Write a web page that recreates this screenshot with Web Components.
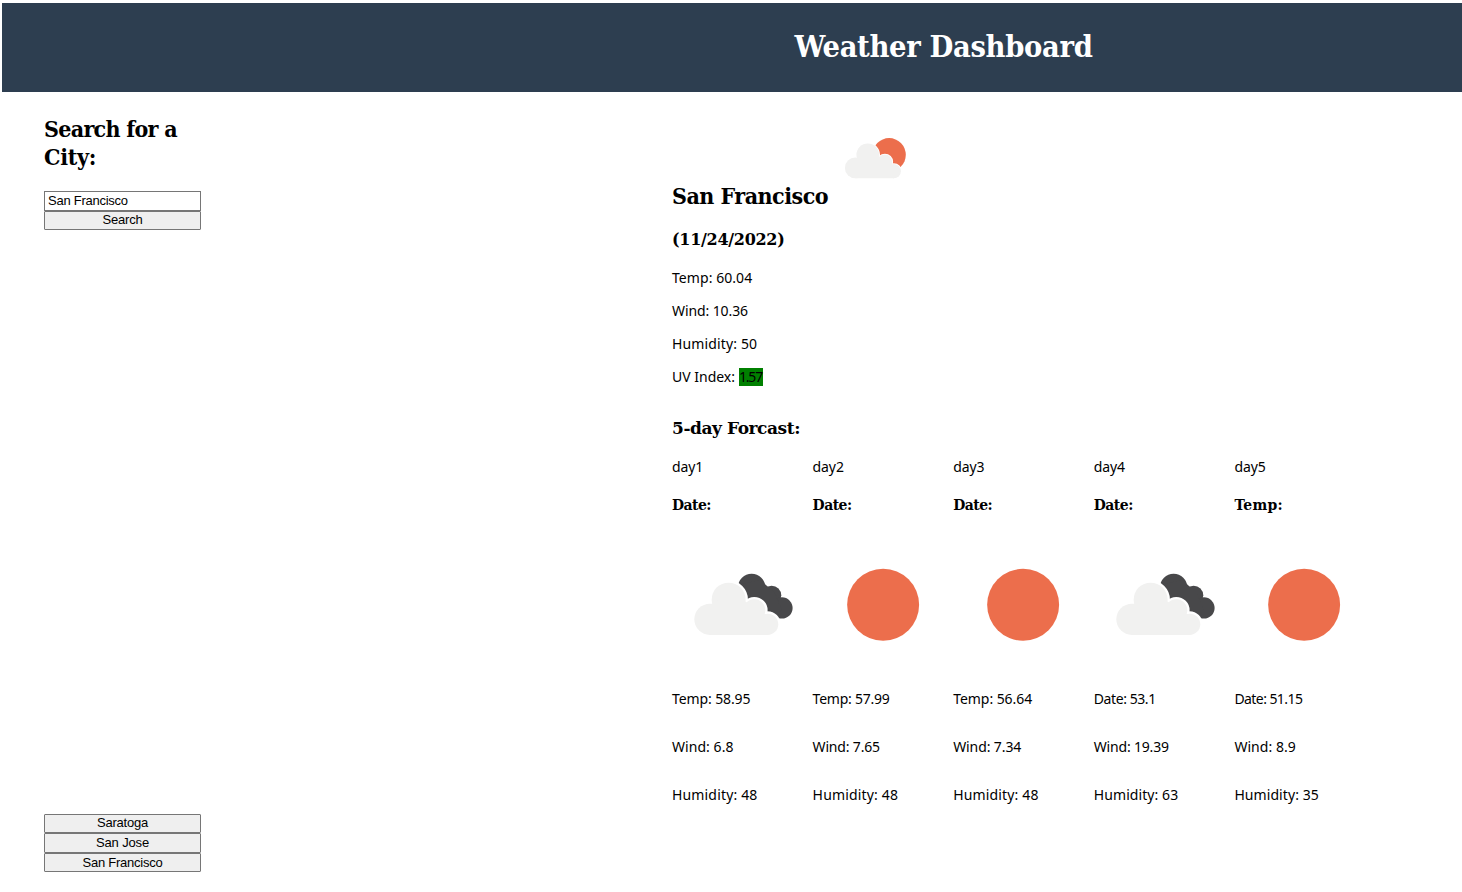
<!DOCTYPE html>
<html lang="en">
<head>
<meta charset="utf-8">
<title>Weather Dashboard</title>
<style>
html,body{margin:0;background:#fff;color:#000}
body{font-family:"Noto Sans","Open Sans",sans-serif;font-size:14px;overflow:hidden}
</style>
</head>
<body>
<weather-app></weather-app>
<script>
// Inline text whose tracking is adjusted to fill a set measure.
class FitText extends HTMLElement{
  connectedCallback(){
    if(!this.shadowRoot)this.attachShadow({mode:'open'}).innerHTML='<style>:host{display:inline-block;white-space:nowrap;vertical-align:top}</style><slot></slot>';
    const target=parseFloat(this.getAttribute('w'));
    const natural=this.getBoundingClientRect().width;
    const n=this.textContent.length;
    if(target&&natural)this.style.letterSpacing=((target-natural)/n).toFixed(3)+'px';
  }
}
customElements.define('fit-text',FitText);

// The cloud shape is drawn twice: a white halo first, then the fill.
const shape=`<circle cx="283" cy="482" r="33"/><circle cx="323" cy="524" r="32"/><circle cx="206" cy="450" r="51"/>`;
const cloud=halo=>`<g fill="#fff" stroke="#fff" stroke-width="${halo}">${shape}</g><g fill="#f1f1f0">${shape}<circle cx="150" cy="509" r="47"/><path d="M150 556V470L206 430L255 455L310 490L340 510L323 556Z"/></g>`;
class WeatherIcon extends HTMLElement{
  constructor(){super();this.attachShadow({mode:'open'});}
  connectedCallback(){
    const k=this.getAttribute('kind');
    const art={
      clouds:`<g fill="#48484a"><circle cx="275" cy="413" r="41"/><circle cx="335" cy="437" r="29"/><circle cx="366" cy="475" r="32"/><path d="M236 405L300 390L345 430L365 480L348 502L318 486L262 447Z"/></g>`+cloud(14),
      sun:`<circle cx="246.5" cy="465.5" r="108" fill="#ec6e4c"/>`,
      partly:`<circle cx="302" cy="450" r="75" fill="#ec6e4c"/>`+cloud(8)
    }[k];
    this.shadowRoot.innerHTML=`<style>:host{display:block}svg{display:block;width:100%;height:100%}</style><svg viewBox="36 253 422 422" aria-hidden="true">${art}</svg>`;
  }
}
customElements.define('weather-icon',WeatherIcon);

class CityButton extends HTMLElement{
  constructor(){super();this.attachShadow({mode:'open'}).innerHTML=`<style>
  :host{display:block;height:19.6px}
  button{display:block;box-sizing:border-box;width:100%;height:100%;margin:0;padding:0 0 var(--lift,1px);border:1px solid #767676;border-radius:1px;background:#efefef;color:#000;font:13px/15px "Liberation Sans",Arial,sans-serif}
  </style><button><slot></slot></button>`;}
}
customElements.define('city-button',CityButton);

class SearchPanel extends HTMLElement{
  constructor(){super();this.attachShadow({mode:'open'}).innerHTML=`<style>
  :host{display:flex;flex-direction:column;width:157px;height:757px}
  h2{margin:0 0 20px;font:bold 23px/28px "DejaVu Serif Condensed","DejaVu Serif",serif}
  input{display:block;box-sizing:border-box;width:157px;height:20px;margin:0;padding:0 3px 1px;border:1px solid #767676;border-radius:0;background:#fff;color:#000;font:13px "Liberation Sans",Arial,sans-serif;letter-spacing:-.25px}
  .go{height:19px}
  .up{--lift:2px}
  .history{margin-top:auto}
  </style>
  <h2><fit-text w="133">Search for a</fit-text><br><fit-text w="52">City:</fit-text></h2>
  <input value="San Francisco" aria-label="City">
  <city-button class="go up"><fit-text w="40">Search</fit-text></city-button>
  <div class="history"><city-button class="up"><fit-text w="51">Saratoga</fit-text></city-button><city-button><fit-text w="53">San Jose</fit-text></city-button><city-button style="height:19px"><fit-text w="80">San Francisco</fit-text></city-button></div>`;}
}
customElements.define('search-panel',SearchPanel);

class CurrentWeather extends HTMLElement{
  constructor(){super();this.attachShadow({mode:'open'}).innerHTML=`<style>
  :host{display:block}
  .top{display:flex;height:95px;align-items:flex-end}
  h2{margin:0;font:bold 23px/28px "DejaVu Serif Condensed","DejaVu Serif",serif}
  weather-icon{width:93.8px;height:93.8px;margin:0 0 5px 2.1px}
  h3{margin:18px 0 17px;font:bold 16px/24px "DejaVu Serif",serif}
  p{margin:0 0 15px;line-height:18px}
  .uv{display:inline-block;width:24px;height:18px;background:#008000;vertical-align:top}
  </style>
  <div class="top"><h2><fit-text w="156">San Francisco</fit-text></h2><weather-icon kind="partly"></weather-icon></div>
  <h3><fit-text w="112.5">(11/24/2022)</fit-text></h3>
  <p><fit-text w="80.2">Temp: 60.04</fit-text></p>
  <p><fit-text w="76">Wind: 10.36</fit-text></p>
  <p><fit-text w="85.2">Humidity: 50</fit-text></p>
  <p style="display:flex;gap:4px"><fit-text w="63">UV Index:</fit-text><span class="uv"><fit-text w="23">1.57</fit-text></span></p>`;}
}
customElements.define('current-weather',CurrentWeather);

class ForecastDay extends HTMLElement{
  constructor(){super();this.attachShadow({mode:'open'});}
  connectedCallback(){
    const [day,head,hw,kind,...s]=this.getAttribute('data').split('|');
    let rows='';
    for(let i=0;i<s.length;i+=2)rows+=`<p><fit-text w="${s[i+1]}">${s[i]}</fit-text></p>`;
    this.shadowRoot.innerHTML=`<style>
    :host{display:block}
    .day{line-height:18px}
    h4{margin:19px 0;font:bold 15.5px/20px "DejaVu Serif Condensed","DejaVu Serif",serif}
    weather-icon{width:140.6px;height:140.6px;margin-bottom:15.4px}
    p{margin:0 0 30px;line-height:18px}
    </style><div class="day"><fit-text w="31.2">${day}</fit-text></div><h4><fit-text w="${hw}">${head}</fit-text></h4><weather-icon kind="${kind}"></weather-icon>${rows}`;
  }
}
customElements.define('forecast-day',ForecastDay);

class WeatherForecast extends HTMLElement{
  constructor(){super();this.attachShadow({mode:'open'}).innerHTML=`<style>
  :host{display:block;margin-top:30px}
  h3{margin:0 0 18px;font:bold 17px/24px "DejaVu Serif",serif}
  .days{display:grid;grid-template-columns:repeat(5,140.6px)}
  </style><h3><fit-text w="128">5-day Forcast:</fit-text></h3>
  <div class="days">
  <forecast-day data="day1|Date:|39|clouds|Temp: 58.95|78.4|Wind: 6.8|61.5|Humidity: 48|85.5"></forecast-day>
  <forecast-day data="day2|Date:|39|sun|Temp: 57.99|77|Wind: 7.65|67.3|Humidity: 48|85.5"></forecast-day>
  <forecast-day data="day3|Date:|39|sun|Temp: 56.64|79|Wind: 7.34|68|Humidity: 48|85.5"></forecast-day>
  <forecast-day data="day4|Date:|39|clouds|Date: 53.1|62|Wind: 19.39|75|Humidity: 63|84.5"></forecast-day>
  <forecast-day data="day5|Temp:|48.5|sun|Date: 51.15|68|Wind: 8.9|61.5|Humidity: 35|84.5"></forecast-day>
  </div>`;}
}
customElements.define('weather-forecast',WeatherForecast);

class WeatherApp extends HTMLElement{
  constructor(){super();this.attachShadow({mode:'open'}).innerHTML=`<style>
  :host{display:block;width:1462px;height:892px;overflow:hidden}
  header{box-sizing:border-box;height:89px;margin:3px 0 0 2px;padding-left:792.5px;background:#2d3e50;color:#fff}
  h1{margin:0;font:bold 30.5px/87px "DejaVu Serif Condensed","DejaVu Serif",serif}
  main{display:grid;grid-template-columns:628px 1fr;padding:23px 0 0 44px}
  </style>
  <header><h1><fit-text w="298">Weather Dashboard</fit-text></h1></header>
  <main><search-panel></search-panel><section><current-weather></current-weather><weather-forecast></weather-forecast></section></main>`;}
}
customElements.define('weather-app',WeatherApp);
</script>
</body>
</html>
